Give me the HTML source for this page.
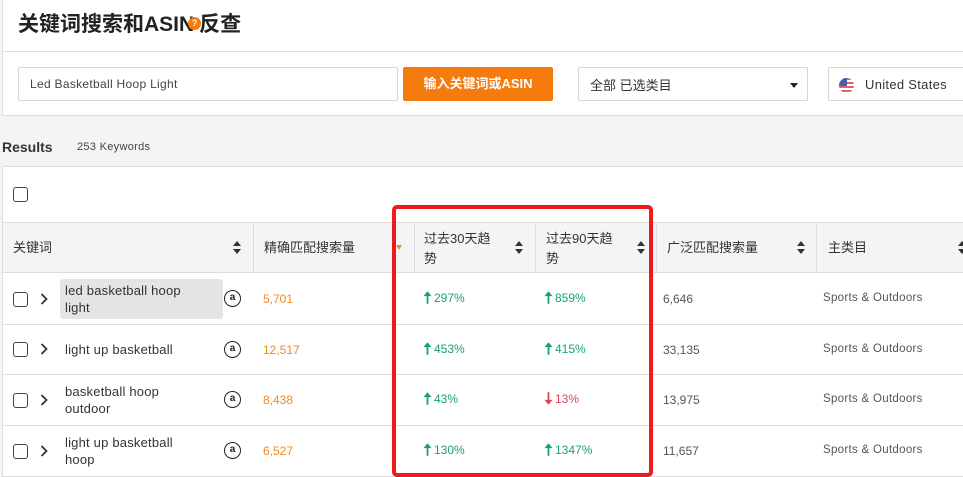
<!DOCTYPE html>
<html><head><meta charset="utf-8"><style>
*{box-sizing:border-box;margin:0;padding:0}
body{width:963px;height:477px;overflow:hidden;background:#f3f4f6;font-family:"Liberation Sans","Noto Sans CJK SC",sans-serif;color:#333;position:relative}
.abs{position:absolute}
.top{left:2px;top:0;width:961px;height:116px;background:#fff;border-left:1px solid #ddd;border-bottom:1px solid #ddd}
.t{left:18px;top:8px;font-size:21px;font-weight:bold;color:#222}
.q{display:inline-block;width:13px;height:13px;border-radius:50%;background:#f47b0c;color:#fff;font-size:9px;text-align:center;line-height:13px;vertical-align:middle;margin-left:-6px;margin-right:-2px;position:relative;top:-2px}
.hl{left:2px;top:51px;width:961px;height:1px;background:#ddd}
.inp{left:18px;top:67px;width:380px;height:34px;border:1px solid #d6d6d6;border-radius:2px;font-size:12px;color:#444;padding:9px 11px;letter-spacing:.3px}
.btn{left:403px;top:67px;width:150px;height:34px;background:#f47b0c;border-radius:2px;color:#fff;font-size:13px;font-weight:bold;text-align:center;line-height:34px}
.sel{left:578px;top:67px;width:230px;height:34px;border:1px solid #d6d6d6;border-radius:2px;font-size:13px;padding:7px 11px}
.car{right:9px;top:15px;border-left:4px solid transparent;border-right:4px solid transparent;border-top:5px solid #222}
.cty{left:828px;top:67px;width:140px;height:34px;border:1px solid #d6d6d6;border-radius:2px;font-size:13px;padding:9px 0 0 36px;color:#333;letter-spacing:.3px}
.flag{left:10px;top:10px;width:15px;height:15px;border-radius:50%;background:repeating-linear-gradient(#d66 0 2px,#fff 2px 4px);overflow:hidden}
.flag:after{content:"";position:absolute;left:0;top:0;width:8px;height:8px;background:#4a5fa8}
.res{left:2px;top:139px;font-size:14px;font-weight:bold;color:#333}
.kw{left:77px;top:141px;font-size:11px;color:#444;letter-spacing:.3px}
.tbl{left:2px;top:166px;width:961px;height:311px;background:#fff;border:1px solid #ddd;border-right:none}
.cb{width:15px;height:15px;border:1.3px solid #444;border-radius:3px;background:#fff}
.hdr{left:3px;top:222px;width:960px;height:51px;background:#f3f4f6;border-top:1px solid #ddd;border-bottom:1px solid #ddd}
.vl{width:1px;background:#ddd}
.ht{font-size:13px;color:#333;line-height:20px}
.sort{width:8px;height:13px}
.row{left:3px;width:960px;height:1px;background:#ddd}
.cell{font-size:13px;color:#333;line-height:17px;letter-spacing:.2px}
.num{font-size:12px;color:#f08a24}
.g{font-size:12px;color:#1aa36b}
.r{font-size:12px;color:#e0435b}
.g svg,.r svg{vertical-align:-2px;margin-right:2px}
.gray{font-size:12px;color:#555}
.cat{font-size:11.5px;color:#555;letter-spacing:.3px}
.amz{width:17px;height:17px;border:1.5px solid #222;border-radius:50%;font-size:10px;font-weight:bold;text-align:center;line-height:13px;color:#222}
.box{left:392px;top:205px;width:261px;height:272px;border:4px solid #f01a1a;border-radius:5px}
</style></head><body>
<svg width="0" height="0" style="position:absolute"><defs>
<symbol id="s" viewBox="0 0 8 13"><path d="M4 0L8 5H0Z M4 13L8 8H0Z" fill="#333"/></symbol>
<symbol id="up" viewBox="0 0 10 14"><path d="M5 1V14" stroke="currentColor" stroke-width="2"/><path d="M5 0L9.5 5.5H0.5Z" fill="currentColor"/></symbol>
<symbol id="dn" viewBox="0 0 10 14"><path d="M5 0V13" stroke="currentColor" stroke-width="2"/><path d="M5 14L9.5 8.5H0.5Z" fill="currentColor"/></symbol>
<symbol id="ch" viewBox="0 0 8 12"><path d="M1.5 1L6.5 6L1.5 11" stroke="#333" stroke-width="1.8" fill="none"/></symbol>
</defs></svg>
<div class="abs top"></div>
<div class="abs t">关键词搜索和ASIN<span class="q">?</span>反查</div>
<div class="abs hl"></div>
<div class="abs inp">Led Basketball Hoop Light</div>
<div class="abs btn">输入关键词或ASIN</div>
<div class="abs sel">全部 已选类目<div class="abs car"></div></div>
<div class="abs cty"><div class="abs flag"></div>United States</div>
<div class="abs res">Results</div>
<div class="abs kw">253 Keywords</div>
<div class="abs tbl"></div>
<div class="abs cb" style="left:13px;top:187px"></div>
<div class="abs hdr"></div>
<div class="abs vl" style="left:253px;top:222px;height:51px"></div>
<div class="abs vl" style="left:414px;top:222px;height:51px"></div>
<div class="abs vl" style="left:535px;top:222px;height:51px"></div>
<div class="abs vl" style="left:656px;top:222px;height:51px"></div>
<div class="abs vl" style="left:816px;top:222px;height:51px"></div>
<div class="abs ht" style="left:13px;top:238px">关键词</div>
<svg class="abs sort" style="left:233px;top:241px"><use href="#s"/></svg>
<div class="abs ht" style="left:264px;top:238px">精确匹配搜索量</div>
<div class="abs" style="left:396px;top:245px;border-left:3px solid transparent;border-right:3px solid transparent;border-top:5px solid #f08a24"></div>
<div class="abs ht" style="left:424px;top:229px">过去30天趋<br>势</div>
<svg class="abs sort" style="left:515px;top:241px"><use href="#s"/></svg>
<div class="abs ht" style="left:546px;top:229px">过去90天趋<br>势</div>
<svg class="abs sort" style="left:637px;top:241px"><use href="#s"/></svg>
<div class="abs ht" style="left:667px;top:238px">广泛匹配搜索量</div>
<svg class="abs sort" style="left:797px;top:241px"><use href="#s"/></svg>
<div class="abs ht" style="left:828px;top:238px">主类目</div>
<svg class="abs sort" style="left:958px;top:241px"><use href="#s"/></svg>

<div class="abs row" style="top:324px"></div>
<div class="abs row" style="top:374px"></div>
<div class="abs row" style="top:425px"></div>
<div class="abs row" style="top:476px"></div>

<!-- row 1 -->
<div class="abs cb" style="left:13px;top:292px"></div>
<svg class="abs" style="left:40px;top:293px" width="8" height="12"><use href="#ch"/></svg>
<div class="abs" style="left:60px;top:279px;width:163px;height:40px;background:#e3e4e6;border-radius:3px"></div>
<div class="abs cell" style="left:65px;top:282px">led basketball hoop<br>light</div>
<div class="abs amz" style="left:224px;top:290px">a</div>
<div class="abs num" style="left:263px;top:292px">5,701</div>
<div class="abs g" style="left:423px;top:291px"><svg width="9" height="13"><use href="#up"/></svg>297%</div>
<div class="abs g" style="left:544px;top:291px"><svg width="9" height="13"><use href="#up"/></svg>859%</div>
<div class="abs gray" style="left:663px;top:292px">6,646</div>
<div class="abs cat" style="left:823px;top:292px">Sports &amp; Outdoors</div>
<!-- row 2 -->
<div class="abs cb" style="left:13px;top:342px"></div>
<svg class="abs" style="left:40px;top:343px" width="8" height="12"><use href="#ch"/></svg>
<div class="abs cell" style="left:65px;top:341px">light up basketball</div>
<div class="abs amz" style="left:224px;top:341px">a</div>
<div class="abs num" style="left:263px;top:343px">12,517</div>
<div class="abs g" style="left:423px;top:342px"><svg width="9" height="13"><use href="#up"/></svg>453%</div>
<div class="abs g" style="left:544px;top:342px"><svg width="9" height="13"><use href="#up"/></svg>415%</div>
<div class="abs gray" style="left:663px;top:343px">33,135</div>
<div class="abs cat" style="left:823px;top:343px">Sports &amp; Outdoors</div>
<!-- row 3 -->
<div class="abs cb" style="left:13px;top:393px"></div>
<svg class="abs" style="left:40px;top:394px" width="8" height="12"><use href="#ch"/></svg>
<div class="abs cell" style="left:65px;top:383px">basketball hoop<br>outdoor</div>
<div class="abs amz" style="left:224px;top:391px">a</div>
<div class="abs num" style="left:263px;top:393px">8,438</div>
<div class="abs g" style="left:423px;top:392px"><svg width="9" height="13"><use href="#up"/></svg>43%</div>
<div class="abs r" style="left:544px;top:392px"><svg width="9" height="13"><use href="#dn"/></svg>13%</div>
<div class="abs gray" style="left:663px;top:393px">13,975</div>
<div class="abs cat" style="left:823px;top:393px">Sports &amp; Outdoors</div>
<!-- row 4 -->
<div class="abs cb" style="left:13px;top:444px"></div>
<svg class="abs" style="left:40px;top:445px" width="8" height="12"><use href="#ch"/></svg>
<div class="abs cell" style="left:65px;top:434px">light up basketball<br>hoop</div>
<div class="abs amz" style="left:224px;top:442px">a</div>
<div class="abs num" style="left:263px;top:444px">6,527</div>
<div class="abs g" style="left:423px;top:443px"><svg width="9" height="13"><use href="#up"/></svg>130%</div>
<div class="abs g" style="left:544px;top:443px"><svg width="9" height="13"><use href="#up"/></svg>1347%</div>
<div class="abs gray" style="left:663px;top:444px">11,657</div>
<div class="abs cat" style="left:823px;top:444px">Sports &amp; Outdoors</div>

<div class="abs box"></div>
</body></html>
